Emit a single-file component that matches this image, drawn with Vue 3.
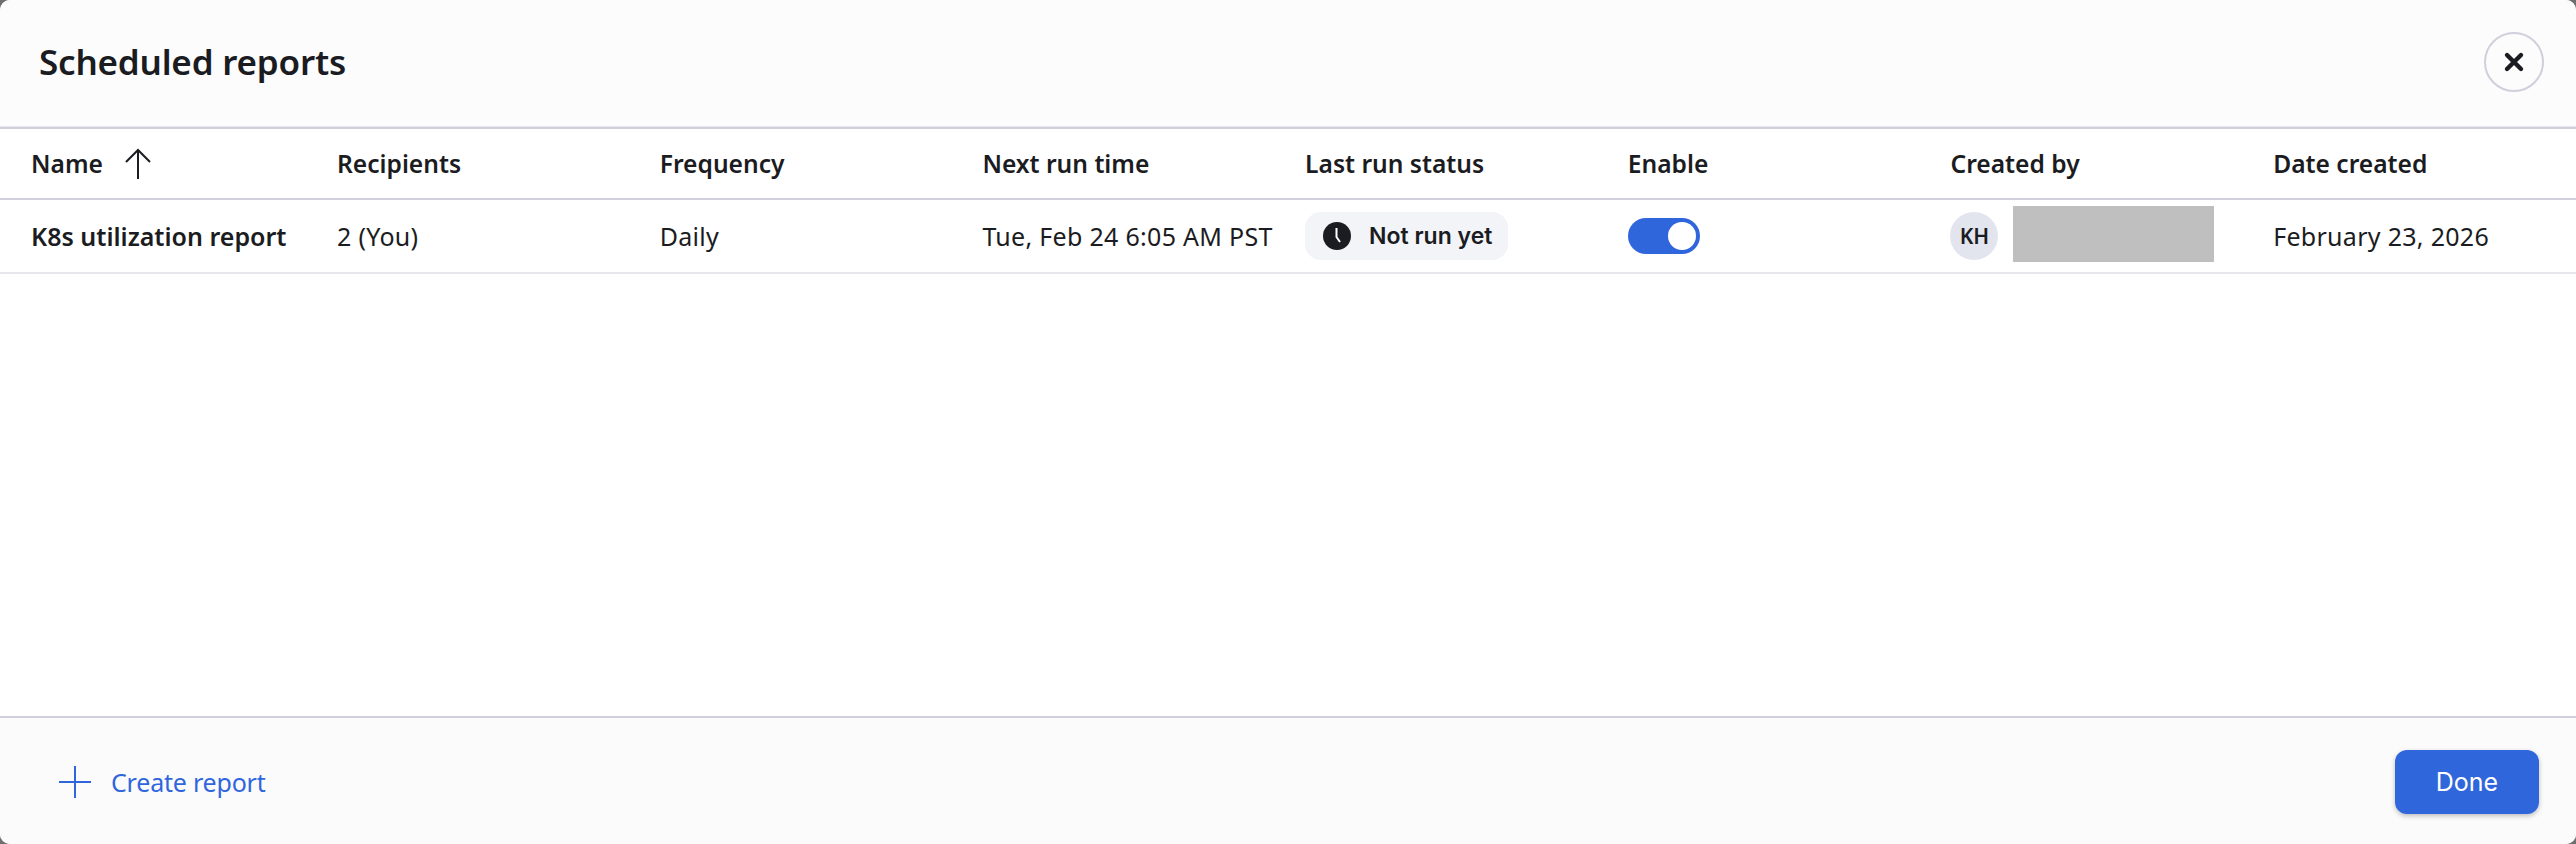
<script setup>
const columns = ['Recipients', 'Frequency', 'Next run time', 'Last run status', 'Enable', 'Created by', 'Date created']
</script>

<template>
  <div class="dialog">
    <header class="head">
      <h1 class="title">Scheduled reports</h1>
      <button class="close" type="button" aria-label="Close">
        <svg width="24" height="24" viewBox="0 0 24 24"><path d="M5 5l14 14M19 5L5 19" fill="none" stroke="#1b1c22" stroke-width="4.4" stroke-linecap="round" /></svg>
      </button>
    </header>

    <main class="table">
      <div class="row row-head">
        <div class="cell name-head">
          <span>Name</span>
          <svg class="arrow" width="28" height="32" viewBox="0 0 28 32"><path d="M14 31V2M2 14L14 2l12 12" fill="none" stroke="#1b1c22" stroke-width="2" /></svg>
        </div>
        <div v-for="c in columns" :key="c" class="cell">{{ c }}</div>
      </div>
      <div class="row row-body">
        <div class="cell strong">K8s utilization report</div>
        <div class="cell">2 (You)</div>
        <div class="cell">Daily</div>
        <div class="cell">Tue, Feb 24 6:05 AM PST</div>
        <div class="cell">
          <span class="pill">
            <svg width="28" height="28" viewBox="0 0 28 28"><circle cx="14" cy="14" r="14" fill="#1b1c22" /><path d="M13.5 6v9l3.5 5" fill="none" stroke="#fff" stroke-width="2" /></svg>
            <span>Not run yet</span>
          </span>
        </div>
        <div class="cell"><span class="toggle"><span class="knob"></span></span></div>
        <div class="cell creator">
          <span class="avatar">KH</span>
          <span class="redact"></span>
        </div>
        <div class="cell">February 23, 2026</div>
      </div>
    </main>

    <footer class="foot">
      <a class="create">
        <svg width="32" height="32" viewBox="0 0 32 32"><path d="M16 0v32M0 16h32" fill="none" stroke="#2f66dc" stroke-width="2" /></svg>
        <span>Create report</span>
      </a>
      <button class="done" type="button">Done</button>
    </footer>
  </div>
</template>

<style>
html, body { margin: 0; background: #6f6f72; }
</style>

<style scoped>
.dialog {
  width: 2576px;
  height: 844px;
  display: flex;
  flex-direction: column;
  background: #fff;
  color: #1b1c22;
  font-family: "Noto Sans", sans-serif;
  font-size: 25px;
  border-radius: 10px;
  overflow: hidden;
}
.head {
  height: 127px;
  flex: none;
  box-sizing: border-box;
  display: flex;
  align-items: center;
  justify-content: space-between;
  padding: 0 32px 3px 39px;
  background: #fcfcfd;
  border-bottom: 1px solid #e6e6ec;
}
.title {
  margin: 0;
  font-size: 35px;
  font-weight: 600;
  letter-spacing: -0.2px;
}
.close {
  width: 60px;
  height: 60px;
  padding: 0;
  display: flex;
  align-items: center;
  justify-content: center;
  background: transparent;
  border: 2px solid #d0cfdb;
  border-radius: 50%;
}
.table { flex: 1; border-top: 2px solid #d0cfdb; }
.row {
  display: grid;
  grid-template-columns: 306px repeat(7, 322.7px);
}
.row-head {
  height: 71px;
  box-sizing: border-box;
  border-bottom: 2px solid #d0cfdb;
  font-size: 24.6px;
  font-weight: 600;
}
.row-body {
  height: 74px;
  box-sizing: border-box;
  border-bottom: 2px solid #e6e6ec;
  letter-spacing: 0.3px;
}
.cell {
  display: flex;
  align-items: center;
  padding-left: 31px;
  min-width: 0;
  white-space: nowrap;
  overflow: hidden;
}
.name-head { gap: 21px; }
.strong { font-weight: 600; letter-spacing: 0; }
.pill {
  display: inline-flex;
  align-items: center;
  gap: 18px;
  height: 48px;
  padding: 0 16px 0 18px;
  background: #f3f4f8;
  border-radius: 16px;
  font-family: Inter, sans-serif;
  font-size: 23px;
  font-weight: 600;
  letter-spacing: 0;
}
.toggle {
  width: 72px;
  height: 36px;
  box-sizing: border-box;
  padding: 4px;
  display: flex;
  justify-content: flex-end;
  background: #2f66dc;
  border-radius: 18px;
}
.knob { width: 28px; height: 28px; border-radius: 50%; background: #fff; }
.creator { gap: 15px; overflow: visible; }
.avatar {
  flex: none;
  width: 48px;
  height: 48px;
  display: flex;
  align-items: center;
  justify-content: center;
  border-radius: 50%;
  background: #e3e5ee;
  font-size: 21px;
  font-weight: 600;
  letter-spacing: 0;
}
.redact { flex: none; width: 201px; height: 56px; margin-bottom: 4px; background: #bfbfbf; }
.foot {
  height: 128px;
  flex: none;
  box-sizing: border-box;
  display: flex;
  align-items: center;
  justify-content: space-between;
  padding: 2px 37px 0 59px;
  background: #fbfbfc;
  border-top: 2px solid #d0cfdb;
}
.create {
  display: flex;
  align-items: center;
  gap: 20px;
  color: #2f66dc;
  letter-spacing: -0.2px;
}
.done {
  width: 144px;
  height: 64px;
  border: 0;
  border-radius: 12px;
  background: #2f66dc;
  color: #fff;
  font-family: Inter, sans-serif;
  font-size: 25px;
  font-weight: 400;
  box-shadow: 0 2px 5px rgba(0, 0, 0, 0.25);
}
</style>
